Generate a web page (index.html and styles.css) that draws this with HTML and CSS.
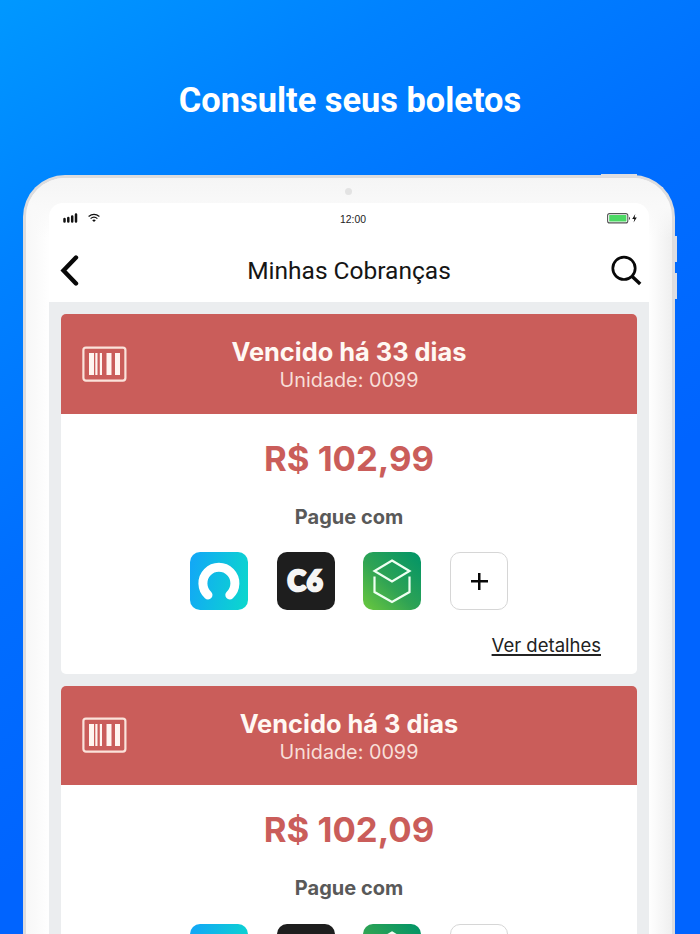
FILE: index.html
```html
<!DOCTYPE html>
<html lang="pt-BR">
<head>
  <meta charset="UTF-8">
  <meta name="viewport" content="width=device-width, initial-scale=1.0">
  <title>Minhas Cobranças</title>
  <link rel="stylesheet" href="styles.css">
</head>
<body>
  <!-- Shared icons -->
  <svg class="sprite" aria-hidden="true">
    <defs>
      <linearGradient id="cube-bg" x1="0" y1="1" x2="1" y2="0">
        <stop offset="0" stop-color="#6cc93d"/>
        <stop offset="0.45" stop-color="#2fa354"/>
        <stop offset="1" stop-color="#009468"/>
      </linearGradient>
      <linearGradient id="arc-bg" x1="0" y1="0.4" x2="1" y2="0.6">
        <stop offset="0" stop-color="#12a9f5"/>
        <stop offset="1" stop-color="#0cd5cf"/>
      </linearGradient>
    </defs>
    <symbol id="barcode" viewBox="0 0 46 36">
      <rect x="2.4" y="1.6" width="42" height="33" rx="2.5" fill="none" stroke="#fbe3db" stroke-width="2.2"/>
      <path d="M8 7h5v22H8zM14.300 7h2.200v22h-2.200zM18.800 7h2.200v22h-2.200zM25.500 7h5v22h-5zM34 7h5v22h-5z" fill="#fff5f0"/>
    </symbol>
    <symbol id="arc" viewBox="0 0 58 58">
      <rect width="58" height="58" rx="10" fill="url(#arc-bg)"/>
      <path d="M18 43A16 16 0 1 1 39.800 43" fill="none" stroke="#fff" stroke-width="9" stroke-linecap="round"/>
    </symbol>
    <symbol id="cube" viewBox="0 0 58 58">
      <rect width="58" height="58" rx="10" fill="url(#cube-bg)"/>
      <path d="M29 8.500 46.500 19 29 29.500 11.500 19ZM11.500 24.500v15.500l17.500 10 17.500-10v-15.500" fill="none" stroke="#effff2" stroke-width="2.200"/>
    </symbol>
  </svg>

  <h1 class="headline">Consulte seus boletos</h1>

  <div class="device">
    <span class="power-button"></span>
    <span class="volume-button volume-up"></span>
    <span class="volume-button volume-down"></span>
    <span class="camera"></span>

    <div class="screen">
      <div class="status-bar">
        <div class="status-left">
          <svg width="15" height="10" viewBox="0 0 15 10">
            <path d="M1.500 8.500V6M5.300 8.500V5M9.200 8.500V3.500M13 8.500V1.500" stroke="#111" stroke-width="2.500" stroke-linecap="round"/>
          </svg>
          <svg width="12" height="10" viewBox="0 0 12 10" fill="none" stroke="#111" stroke-width="1.200">
            <path d="M.6 3.500Q6-.9 11.400 3.500M2.600 5.600Q6 2.600 9.400 5.600"/>
            <path d="M4.200 7.300Q6 5.900 7.800 7.300L6 9.100Z" fill="#111" stroke="none"/>
          </svg>
        </div>
        <span class="clock">12:00</span>
        <svg class="battery" width="31" height="11" viewBox="0 0 31 11">
          <rect x=".6" y=".6" width="20.200" height="9.300" rx="2" fill="#fff" stroke="#555" stroke-width="1.100"/>
          <rect x="2.200" y="2.100" width="17.200" height="6.400" rx=".5" fill="#4cd964"/>
          <path d="M22 3.700q2 1.600 0 3.200z" fill="#444"/>
          <path d="M28.300 1 25.200 6h2.100l-.7 3.500L29.800 4.600h-2.200z" fill="#111"/>
        </svg>
      </div>

      <div class="nav-bar">
        <svg class="back" width="19" height="31" viewBox="0 0 19 31">
          <path d="M16 2.500 3.500 15.500 16 28.500" fill="none" stroke="#080808" stroke-width="4.400" stroke-linecap="round"/>
        </svg>
        <h2>Minhas Cobranças</h2>
        <svg class="search" width="31" height="31" viewBox="0 0 31 31">
          <circle cx="13" cy="13.300" r="11.200" fill="none" stroke="#080808" stroke-width="2.700"/>
          <path d="M20.700 21 29.200 29" stroke="#080808" stroke-width="3.400"/>
        </svg>
      </div>

      <div class="list">
        <div class="card">
          <div class="card-header">
            <svg class="barcode" width="46" height="36"><use href="#barcode"/></svg>
            <div class="title">Vencido há 33 dias</div>
            <div class="unit">Unidade: 0099</div>
          </div>
          <div class="card-body">
            <div class="amount">R$ 102,99</div>
            <div class="pay-label">Pague com</div>
            <div class="pay-options">
              <svg width="58" height="58"><use href="#arc"/></svg>
              <div class="option c6">C6</div>
              <svg width="58" height="58"><use href="#cube"/></svg>
              <div class="option more"></div>
            </div>
            <a href="#" class="details">Ver detalhes</a>
          </div>
        </div>

        <div class="card">
          <div class="card-header">
            <svg class="barcode" width="46" height="36"><use href="#barcode"/></svg>
            <div class="title">Vencido há 3 dias</div>
            <div class="unit">Unidade: 0099</div>
          </div>
          <div class="card-body">
            <div class="amount">R$ 102,09</div>
            <div class="pay-label">Pague com</div>
            <div class="pay-options">
              <svg width="58" height="58"><use href="#arc"/></svg>
              <div class="option c6"></div>
              <svg width="58" height="58"><use href="#cube"/></svg>
              <div class="option more"></div>
            </div>
          </div>
        </div>
      </div>
    </div>
  </div>
</body>
</html>
```

FILE: styles.css
```css
:root {
  --red: #ca5d5a;
  --screen-bg: #ebedef;
}

* {
  box-sizing: border-box;
  margin: 0;
  padding: 0;
}

body {
  height: 934px;
  overflow: hidden;
  background: linear-gradient(147deg, #0098ff 0%, #0082ff 19%, #006eff 42%, #0064ff 64%);
  font-family: Inter, 'Liberation Sans', sans-serif;
}

.sprite {
  position: absolute;
  width: 0;
  height: 0;
}

.headline {
  height: 175px;
  padding-top: 79px;
  color: white;
  font-family: Roboto, sans-serif;
  font-size: 34.4px;
  line-height: 42px;
  font-weight: 700;
  text-align: center;
}

/* Tablet frame */
.device {
  position: relative;
  width: 652px;
  height: 759px;
  margin-left: 23px;
  padding: 25px 23px 0;
  border: 3px solid #dcdcde;
  border-bottom: none;
  border-radius: 42px 42px 0 0;
  background: linear-gradient(90deg, #f7f7f7, #fefefe 22px, #fefefe 624px, #efefef);
}

.device::before {
  content: "";
  position: absolute;
  top: 0;
  left: 0;
  right: 0;
  height: 60px;
  border-radius: 39px 39px 0 0;
  background: linear-gradient(#f5f5f5, #f9f9f9 28px, transparent);
}

.power-button,
.volume-button,
.camera {
  position: absolute;
}

.power-button {
  top: -4px;
  left: 575px;
  width: 36px;
  height: 3px;
  background: #dedee1;
}

.volume-button {
  right: -5px;
  width: 3px;
  height: 26px;
  background: #dcdde2;
}

.volume-up {
  top: 58px;
}

.volume-down {
  top: 95px;
}

.camera {
  top: 10px;
  left: 319px;
  width: 7px;
  height: 7px;
  border-radius: 50%;
  background: #e3e3e3;
}

.screen {
  position: relative;
  height: 100%;
  border-radius: 14px 14px 0 0;
  background: white;
  overflow: hidden;
}

.status-bar {
  display: grid;
  grid-template-columns: 1fr auto 1fr;
  align-items: center;
  height: 30px;
  padding: 0 11px 0 14px;
}

.status-left {
  display: flex;
  gap: 10px;
}

.clock {
  padding: 2px 0 0 5px;
  color: #222;
  font-family: 'Liberation Sans', sans-serif;
  font-size: 10.4px;
}

.battery {
  justify-self: end;
}

.nav-bar {
  display: flex;
  align-items: center;
  justify-content: space-between;
  height: 69px;
  padding: 6px 7px 0 11px;
}

.nav-bar h2 {
  margin-left: 8px;
  color: #151515;
  font-family: Roboto, sans-serif;
  font-size: 24.5px;
  font-weight: 400;
}

.list {
  display: flex;
  flex-direction: column;
  gap: 11.5px;
  height: 632px;
  padding: 12px;
  background: var(--screen-bg);
  overflow: hidden;
}

.card {
  flex: none;
  height: 360px;
  border-radius: 5px;
  background: white;
  overflow: hidden;
}

.card-header {
  position: relative;
  height: 99.5px;
  padding-top: 23px;
  background: var(--red);
  text-align: center;
}

.barcode {
  position: absolute;
  top: 31.5px;
  left: 20px;
}

.title {
  color: #fff8f3;
  font-size: 25.4px;
  line-height: 30px;
  font-weight: 700;
}

.unit {
  color: #f8dfd8;
  font-size: 19.8px;
  line-height: 26px;
}

.card-body {
  display: flex;
  flex-direction: column;
  align-items: center;
  padding-top: 22px;
}

.amount {
  color: var(--red);
  font-size: 34.7px;
  line-height: 44px;
  font-weight: 700;
}

.pay-label {
  margin-top: 24px;
  color: #595959;
  font-size: 20px;
  line-height: 26px;
  font-weight: 700;
}

.pay-options {
  display: flex;
  gap: 28.8px;
  margin-top: 22.5px;
}

.option {
  display: flex;
  align-items: center;
  justify-content: center;
  width: 58px;
  height: 58px;
  border-radius: 10px;
}

.c6 {
  padding-bottom: 1px;
  background: #1e1e1e;
  color: #f5f5f5;
  font-family: Lato, sans-serif;
  font-size: 27.5px;
  font-weight: 900;
  letter-spacing: 1px;
  -webkit-text-stroke: 2.6px #f5f5f5;
}

/* Plus sign made of two bars */
.more {
  border: 1px solid #d6d6d6;
  background:
    linear-gradient(#080808, #080808) center / 17px 2.5px no-repeat,
    linear-gradient(#080808, #080808) center / 2.5px 17px no-repeat;
}

.details {
  align-self: flex-end;
  margin: 22px 36px 0 0;
  color: #222;
  font-size: 18.5px;
  line-height: 26px;
  text-decoration: underline;
  text-decoration-thickness: 1.5px;
  text-underline-offset: 2px;
  text-decoration-skip-ink: none;
}
```
